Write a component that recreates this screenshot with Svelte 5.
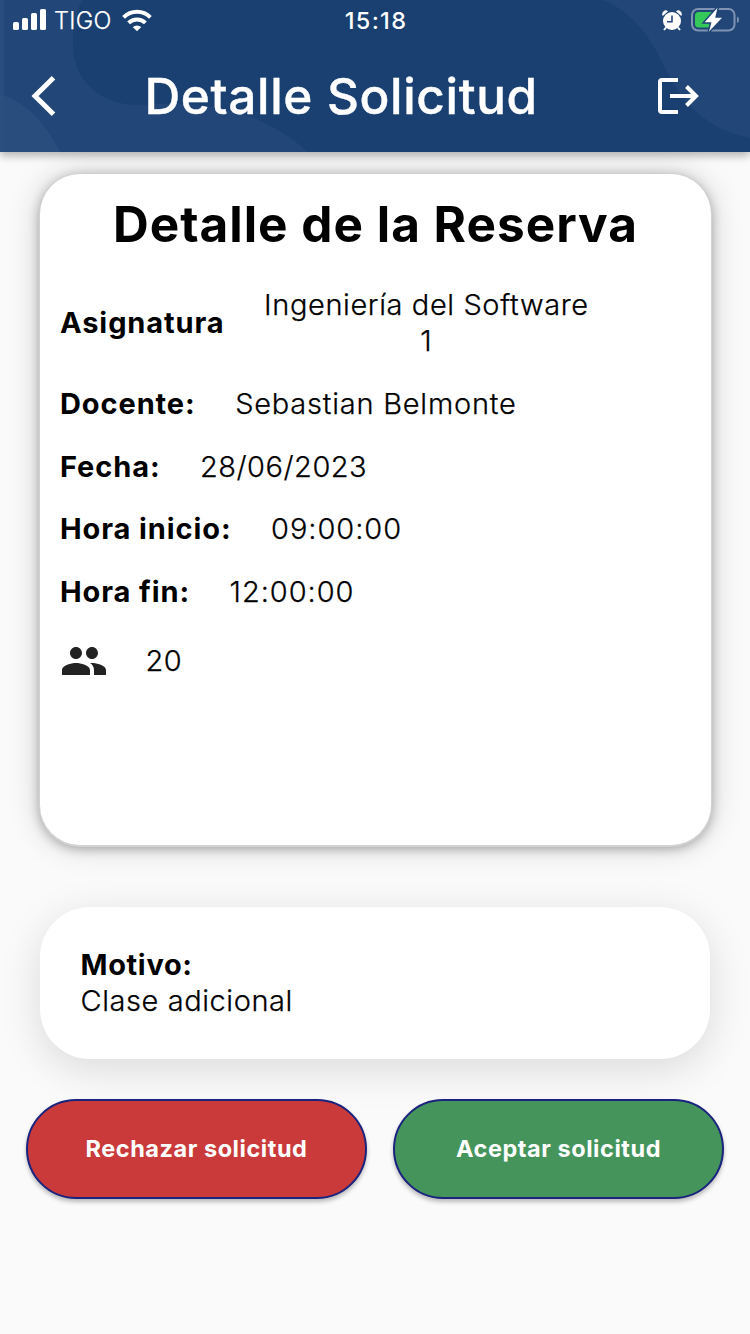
<script>
  const rows = [
    { label: 'Docente:', value: 'Sebastian Belmonte', ls: '0.77px' },
    { label: 'Fecha:', value: '28/06/2023', ls: '0.5px' },
    { label: 'Hora inicio:', value: '09:00:00', ls: '0.95px' },
    { label: 'Hora fin:', value: '12:00:00', ls: '0.95px' }
  ];
</script>

<div class="screen">
  <header>
    <svg class="waves" viewBox="0 0 750 152" width="750" height="152" aria-hidden="true">
      <rect width="750" height="152" fill="#194070" />
      <path d="M0 0H83C75 12 73 28 73 45C73 78 98 105 138 105C200 101 255 105 308 152H0Z" fill="#214677" />
      <path d="M0 94C28 103 47 125 60 152H0Z" fill="#294d7c" />
      <path d="M603 0C633 13 649 36 660 58C676 91 695 127 750 138V0Z" fill="#214677" />
      <rect width="4" height="152" fill="#2e5180" opacity=".6" />
    </svg>
    <div class="status">
      <div class="left">
        <svg width="34" height="22" viewBox="0 0 34 22" fill="#fff">
          <rect x="0" y="13" width="6" height="8" rx="1.6" />
          <rect x="9" y="9" width="6" height="12" rx="1.6" />
          <rect x="18" y="4" width="6" height="17" rx="1.6" />
          <rect x="27" y="0" width="6" height="21" rx="1.6" />
        </svg>
        <span class="carrier">TIGO</span>
        <svg class="wifi" width="30" height="23" viewBox="0 0 30 23" fill="none" stroke="#fff" stroke-width="4">
          <path d="M1.6 8.3A19 19 0 0 1 28.4 8.3" />
          <path d="M6.600 13.900A12 12 0 0 1 23.400 13.900" />
          <path d="M15 22.300L10.700 18Q15 14.800 19.300 18Z" fill="#fff" stroke="none" />
        </svg>
      </div>
      <span class="time">15:18</span>
      <div class="right">
        <svg width="20" height="21" viewBox="0 0 20 21">
          <g fill="#fff">
            <circle cx="10" cy="11" r="9" />
            <path d="M.8 6A3.6 3.6 0 0 1 6 1.2ZM19.2 6A3.6 3.6 0 0 0 14 1.2Z" />
          </g>
          <path d="M4 17.5L2 20M16 17.5L18 20" stroke="#fff" stroke-width="2" />
          <path d="M10 5.5V11.7H5" fill="none" stroke="#214677" stroke-width="1.6" />
        </svg>
        <svg width="48" height="26" viewBox="0 0 48 26">
          <rect x="1" y="2" width="42.500" height="21.500" rx="6" fill="none" stroke="#8093b3" stroke-width="2" />
          <path d="M46 9.500Q48 10 48 12.700T46 16Z" fill="#8093b3" />
          <rect x="4" y="5" width="19" height="15.500" rx="3.500" fill="#34c759" />
          <path d="M26.500 .8L13.700 15.200H20.500L18 24.500L31 10.800H24.200Z" fill="#fff" stroke="#214677" stroke-width="3" paint-order="stroke" />
        </svg>
      </div>
    </div>
    <div class="bar">
      <svg width="28" height="42" viewBox="0 0 28 42" fill="none" stroke="#fff" stroke-width="5">
        <path d="M23.500 2.700L5 21L23.500 39.300" />
      </svg>
      <h1>Detalle Solicitud</h1>
      <svg width="42" height="38" viewBox="0 0 42 38" fill="none" stroke="#fff" stroke-width="4">
        <path d="M21 3H5Q3 3 3 5V33Q3 35 5 35H21" />
        <path d="M13 19H40" />
        <path d="M29.500 9.500L39 19L29.500 28.500" />
      </svg>
    </div>
  </header>

  <main>
    <section class="card">
      <h2>Detalle de la Reserva</h2>
      <div class="row first">
        <b>Asignatura</b>
        <span class="subject">Ingeniería del Software<br />1</span>
      </div>
      {#each rows as r}
        <div class="row">
          <b>{r.label}</b>
          <span style:letter-spacing={r.ls}>{r.value}</span>
        </div>
      {/each}
      <div class="row people">
        <svg width="48" height="48" viewBox="0 0 24 24" fill="#222">
          <path d="M16 11c1.660 0 2.990-1.340 2.990-3S17.660 5 16 5s-3 1.340-3 3 1.340 3 3 3zm-8 0c1.660 0 2.990-1.340 2.990-3S9.660 5 8 5 5 6.340 5 8s1.340 3 3 3zm0 2c-2.330 0-7 1.170-7 3.500V19h14v-2.500c0-2.330-4.670-3.500-7-3.500zm8 0c-.290 0-.620.020-.970.050 1.160.840 1.970 1.970 1.970 3.450V19h6v-2.500c0-2.330-4.670-3.500-7-3.500z" />
        </svg>
        <span>20</span>
      </div>
    </section>

    <section class="reason">
      <b>Motivo:</b>
      <span>Clase adicional</span>
    </section>

    <div class="actions">
      <button class="reject">Rechazar solicitud</button>
      <button class="accept">Aceptar solicitud</button>
    </div>
  </main>
</div>

<style>
  :global(body) { margin: 0; background: #fafafa; }
  .screen {
    width: 750px;
    height: 1334px;
    overflow: hidden;
    background: #fafafa;
    font-family: Inter, "Liberation Sans", sans-serif;
    color: #000;
  }
  svg { display: block; flex: none; }
  header {
    position: relative;
    z-index: 1;
    height: 152px;
    box-shadow: 0 4px 8px rgba(0, 0, 0, .2), 0 2px 10px rgba(0, 0, 0, .12);
    color: #fff;
  }
  .waves { position: absolute; inset: 0; }
  .status {
    position: relative;
    height: 40px;
    display: grid;
    grid-template-columns: 1fr auto 1fr;
    align-items: center;
    padding: 0 11px 0 13px;
    box-sizing: border-box;
  }
  .status > div { height: 40px; align-self: start; }
  .left, .right { display: flex; align-items: center; }
  .right { justify-content: flex-end; gap: 9px; }
  .carrier { font-size: 23.5px; font-weight: 350; -webkit-text-stroke: .25px #fff; margin-left: 7px; letter-spacing: .3px; line-height: 39px; padding-top: 1px; }
  .wifi { margin-left: 10px; }
  .time { font-size: 23.5px; font-weight: 500; letter-spacing: 1.3px; line-height: 40px; padding-top: 1px; }
  .bar {
    position: relative;
    height: 112px;
    display: flex;
    align-items: center;
    padding: 0 51px 0 30px;
  }
  h1 { margin: 0 0 0 86.5px; flex: 1; font-size: 49.5px; line-height: 60px; font-weight: 500; -webkit-text-stroke: .4px #fff; letter-spacing: .65px; white-space: nowrap; }
  main { padding-top: 22px; }
  .card {
    box-sizing: border-box;
    margin: 0 39.5px;
    height: 671px;
    padding: 20px 20.5px;
    border-radius: 40px;
    background: #fff;
    box-shadow: 0 1px 0 1px #d2d2d2, 0 3px 12px rgba(0, 0, 0, .32), 0 0 32px rgba(0, 0, 0, .18);
  }
  h2 { margin: 0 0 33px; font-size: 49.5px; line-height: 60px; font-weight: 700; text-align: center; text-indent: 1px; letter-spacing: 1px; white-space: nowrap; }
  .row { display: flex; align-items: center; gap: 39.5px; margin-bottom: 26.6px; font-size: 29px; line-height: 36px; white-space: nowrap; }
  .row b, .reason b { font-weight: 700; letter-spacing: .9px; }
  .row span, .reason span { font-weight: 350; -webkit-text-stroke: .25px #000; }
  .row.first { margin-bottom: 27px; }
  .row.first span { letter-spacing: .6px; }
  .subject { text-align: center; }
  .people { margin-top: 27px; gap: 38px; }
  .people svg { margin-left: -.5px; }
  .people span { letter-spacing: .5px; }
  .reason {
    box-sizing: border-box;
    margin: 62px 40px 0;
    height: 152px;
    padding: 40px 40.5px;
    border-radius: 50px;
    background: #fff;
    display: flex;
    flex-direction: column;
    font-size: 29px;
    line-height: 36px;
    box-shadow: 0 10px 40px rgba(0, 0, 0, .13);
  }
  .reason b { letter-spacing: .65px; }
  .reason span { letter-spacing: .57px; }
  .actions { position: relative; display: flex; gap: 26px; padding: 40px 26px 0; }
  button {
    height: 100px;
    padding: 0;
    border: 2px solid #1a237e;
    border-radius: 50px;
    color: #fff;
    font: 700 23.5px/28px Inter, "Liberation Sans", sans-serif;
    letter-spacing: .55px;
    box-shadow: 0 3px 4px rgba(0, 0, 0, .26);
  }
  .reject { width: 341px; background: #ca3a3b; }
  .accept { width: 331px; background: #44945b; }
</style>
